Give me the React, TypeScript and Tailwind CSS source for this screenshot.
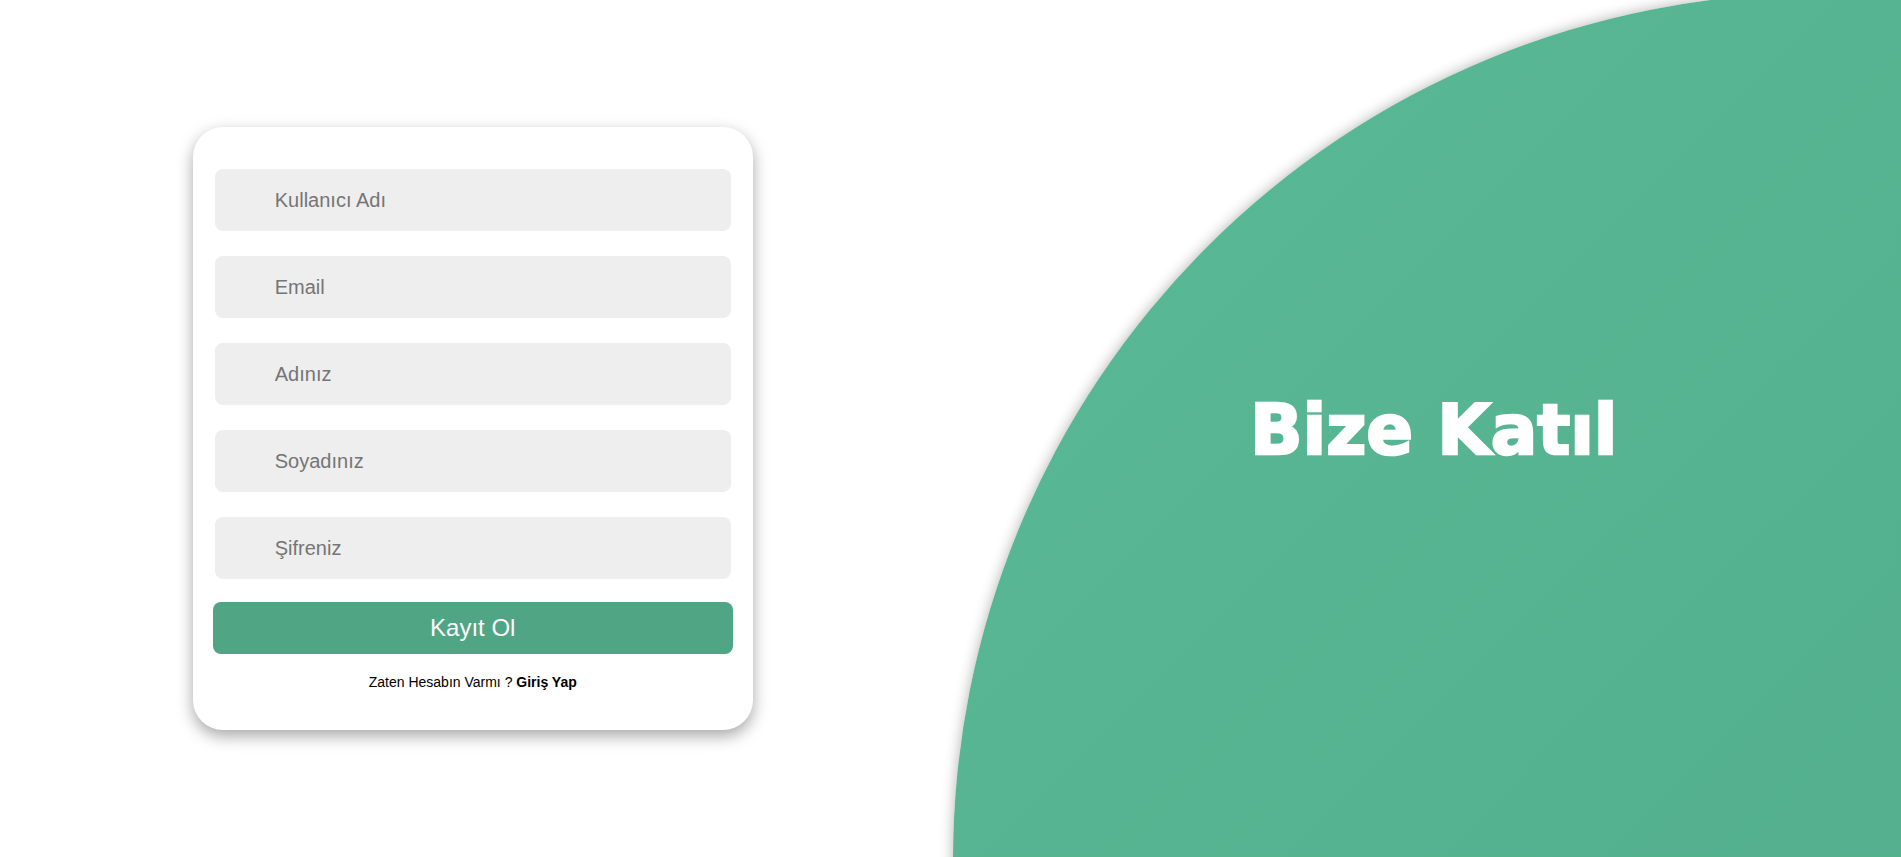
import React from 'react';

const fields = ['Kullanıcı Adı', 'Email', 'Adınız', 'Soyadınız', 'Şifreniz'];

export default function App() {
  return (
    <div className="relative flex h-screen w-full overflow-hidden bg-white font-['Liberation_Sans',Arial,sans-serif]">
      {/* big decorative circle */}
      <div className="pointer-events-none absolute left-[953px] top-[-7px] h-[1734px] w-[1734px] rounded-full bg-linear-to-br from-[#59b996] to-[#4fa886] shadow-[0_0_14px_rgba(0,0,0,0.3)]" />

      {/* form side */}
      <div className="relative z-10 flex w-1/2 items-center justify-center">
        <form
          onSubmit={(e) => e.preventDefault()}
          className="mr-[5px] flex h-[603px] w-[560px] flex-col rounded-[30px] bg-white px-5 pt-[42px] shadow-[0_6px_16px_rgba(0,0,0,0.35)]"
        >
          <div className="flex flex-col gap-[25px] px-0.5">
            {fields.map((f) => (
              <input
                key={f}
                type={f === 'Şifreniz' ? 'password' : 'text'}
                placeholder={f}
                className="h-[62px] w-full rounded-lg bg-[#eeeeee] pl-[60px] text-[20px] text-[#333] outline-none placeholder:text-[#757575]"
              />
            ))}
          </div>
          <button
            type="submit"
            className="mt-[23px] h-[52px] w-full rounded-lg bg-[#50a584] text-[24px] text-white"
          >
            Kayıt Ol
          </button>
          <p className="mt-[18px] text-center text-[14px] leading-5 text-black">
            Zaten Hesabın Varmı ? <a href="#" className="font-bold">Giriş Yap</a>
          </p>
        </form>
      </div>

      {/* title side */}
      <div className="relative z-10 flex w-1/2 items-center justify-center">
        <h1 className="ml-[16px] mt-[4px] font-['DejaVu_Sans',sans-serif] text-[69px] font-bold leading-none text-white [-webkit-text-stroke:2.5px_white]">
          Bize Katıl
        </h1>
      </div>
    </div>
  );
}
